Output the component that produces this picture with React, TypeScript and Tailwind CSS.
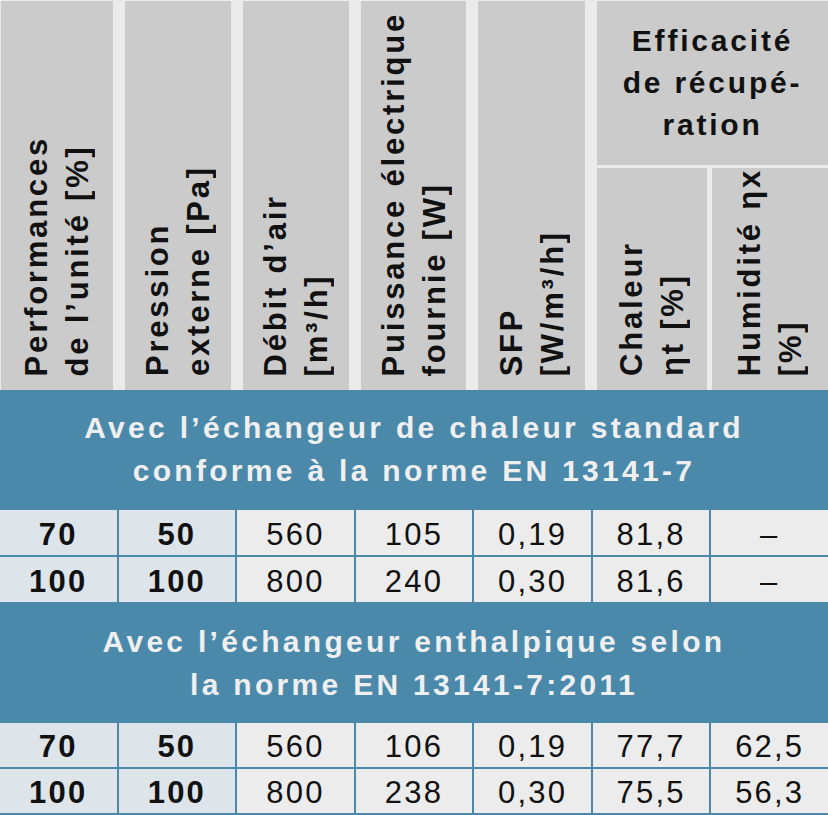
import React from "react";

const HeadCell = ({ lines, className = "" }: { lines: string[]; className?: string }) => (
  <div className={`flex items-end justify-center bg-[#cbcbcb] pb-[14px] ${className}`}>
    <div className="[writing-mode:vertical-rl] rotate-180 whitespace-nowrap text-[31px] font-bold leading-[41px] tracking-[2.8px] text-[#111]">
      {lines.map((l) => (
        <div key={l}>{l}</div>
      ))}
    </div>
  </div>
);

const Band = ({ children, h }: { children: React.ReactNode; h: string }) => (
  <div className={`flex items-center justify-center ${h} text-center text-[30px] font-bold leading-[43px] tracking-[3.3px] text-[#efefef]`}>
    <div>{children}</div>
  </div>
);

const Row = ({ cells, h }: { cells: string[]; h: string }) => (
  <div className={`grid ${h} grid-cols-7 gap-x-[2px] overflow-hidden`}>
    {cells.map((c, i) => (
      <div
        key={i}
        className={`flex items-center justify-center pt-[3px] text-[31px] leading-[31px] tracking-[2.2px] text-[#111] ${
          i < 2 ? "bg-[#dde5ea] font-bold" : "bg-[#ececec]"
        }`}
      >
        {c}
      </div>
    ))}
  </div>
);

export default function App() {
  return (
    <div className="w-[828px] h-[815px] bg-white font-['Liberation_Sans',Arial,sans-serif]">
      {/* Header */}
      <div className="flex h-[390px] gap-3 bg-[#ebebeb] pl-px pt-px">
        <HeadCell className="w-[112px]" lines={["Performances", "de l’unité [%]"]} />
        <HeadCell className="w-[106px]" lines={["Pression", "externe [Pa]"]} />
        <HeadCell className="w-[106px]" lines={["Débit d’air", "[m³/h]"]} />
        <HeadCell className="w-[105px]" lines={["Puissance électrique", "fournie [W]"]} />
        <HeadCell className="w-[107px]" lines={["SFP", "[W/m³/h]"]} />
        <div className="flex flex-1 flex-col gap-[3px]">
          <div className="flex h-[166px] items-center justify-center bg-[#cbcbcb] text-center text-[30px] font-bold leading-[42px] tracking-[2.8px] text-[#111]">
            <div>
              Efficacité
              <br />
              de récupé-
              <br />
              ration
            </div>
          </div>
          <div className="flex flex-1 gap-[5px]">
            <HeadCell className="w-[110px]" lines={["Chaleur", "ηt [%]"]} />
            <HeadCell className="flex-1" lines={["Humidité ηx", "[%]"]} />
          </div>
        </div>
      </div>

      {/* Body */}
      <div className="flex h-[425px] flex-col gap-[2px] bg-[#4b89ab] pb-[2px]">
        <Band h="h-[118px]">
          Avec l’échangeur de chaleur standard
          <br />
          conforme à la norme EN 13141-7
        </Band>
        <Row h="h-[45px]" cells={["70", "50", "560", "105", "0,19", "81,8", "–"]} />
        <Row h="h-[45px]" cells={["100", "100", "800", "240", "0,30", "81,6", "–"]} />
        <Band h="h-[117px]">
          Avec l’échangeur enthalpique selon
          <br />
          la norme EN 13141-7:2011
        </Band>
        <Row h="h-[44px]" cells={["70", "50", "560", "106", "0,19", "77,7", "62,5"]} />
        <Row h="h-[44px]" cells={["100", "100", "800", "238", "0,30", "75,5", "56,3"]} />
      </div>
    </div>
  );
}
